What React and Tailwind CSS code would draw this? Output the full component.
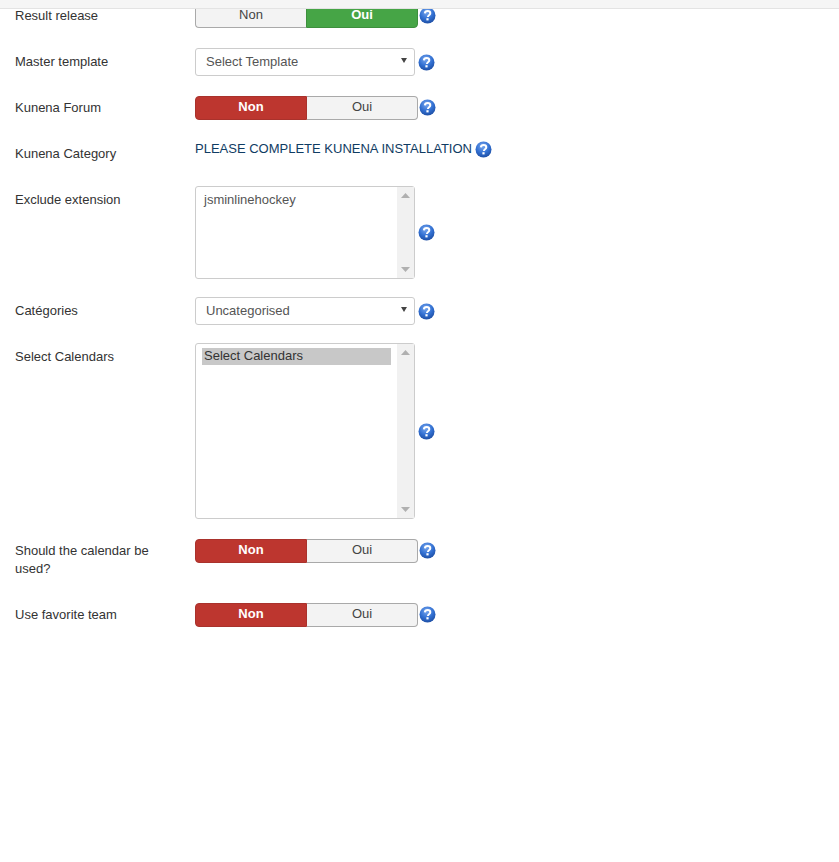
import React from 'react'

// Icône d'aide ronde bleue avec point d'interrogation
function Help({ className = '' }) {
  return (
    <svg width="17" height="17" viewBox="0 0 17 17" className={`shrink-0 ${className}`}>
      <defs>
        <radialGradient id="helpBlue" cx="45%" cy="30%" r="75%">
          <stop offset="0%" stopColor="#7aa8ee" />
          <stop offset="55%" stopColor="#3270d2" />
          <stop offset="100%" stopColor="#1b4a9e" />
        </radialGradient>
      </defs>
      <circle cx="8.5" cy="8.5" r="8" fill="url(#helpBlue)" />
      <path d="M5.9 6.4C6 4.9 7.1 4.1 8.6 4.1c1.6 0 2.7.9 2.7 2.2 0 1-.6 1.5-1.3 2-.7.5-1.1.9-1.1 1.8" fill="none" stroke="#fff" strokeWidth="2" />
      <rect x="7.4" y="11.2" width="2.2" height="2.2" fill="#fff" />
    </svg>
  )
}

function Row({ label, children }) {
  return (
    <div className="flex items-start mb-[18px]">
      <div className="w-[180px] shrink-0 pt-[5px] pb-[5px] pr-[30px] leading-[18px] text-[#333]">{label}</div>
      {children}
    </div>
  )
}

// Oui / Non : le côté actif est coloré
function Toggle({ value }) {
  const non = value === 'Non'
  return (
    <div className="flex items-center mt-[2px]">
      <div className="flex w-[223px] h-[24px] leading-[20px]">
        {non ? (
          <>
            <div className="w-[112px] text-center rounded-l-[4px] border border-[#a9322c] bg-[#bd362f] text-white font-bold">Non</div>
            <div className="flex-1 text-center rounded-r-[4px] border border-l-0 border-[#a9a9a9] bg-[#f3f3f3] text-[#444]">Oui</div>
          </>
        ) : (
          <>
            <div className="w-[111px] text-center rounded-l-[4px] border border-r-0 border-[#a9a9a9] bg-[#f3f3f3] text-[#444]">Non</div>
            <div className="flex-1 text-center rounded-r-[4px] border border-[#3d8f3d] bg-[#46a546] text-white font-bold">Oui</div>
          </>
        )}
      </div>
      <Help className="ml-px -mt-[2px]" />
    </div>
  )
}

function Select({ value }) {
  return (
    <div className="flex items-center">
      <div className="flex items-center justify-between w-[220px] h-[28px] rounded-[3px] border border-[#ccc] bg-white pl-[10px] pr-[7px] text-[#555]">
        <span>{value}</span>
        <svg width="6" height="5" viewBox="0 0 6 5" className="-mt-[4px]"><path d="M0 0h6L3 5z" fill="#444" /></svg>
      </div>
      <Help className="ml-[3px]" />
    </div>
  )
}

function ListBox({ height, children }) {
  return (
    <div className="flex items-center">
      <div className={`flex w-[220px] rounded-[3px] border border-[#ccc] bg-white ${height}`}>
        <div className="flex-1 min-w-0">{children}</div>
        <div className="flex flex-col justify-between items-center w-[17px] bg-[#f1f1f1] py-[6px]">
          <svg width="9" height="5" viewBox="0 0 9 5"><path d="M4.5 0L9 5H0z" fill="#b0b0b0" /></svg>
          <svg width="9" height="5" viewBox="0 0 9 5"><path d="M0 0h9L4.5 5z" fill="#b0b0b0" /></svg>
        </div>
      </div>
      <Help className="ml-[3px]" />
    </div>
  )
}

export default function App() {
  return (
    <div className="h-[862px] overflow-hidden bg-white text-[13px] font-['Liberation_Sans',Arial,sans-serif]">
      <div className="relative z-10 h-[9px] bg-[#f5f5f5] border-b border-[#e3e3e3]" />
      <div className="-mt-[7px] pl-[15px]">
        <Row label="Result release"><Toggle value="Oui" /></Row>
        <Row label="Master template"><Select value="Select Template" /></Row>
        <Row label="Kunena Forum"><Toggle value="Non" /></Row>
        <Row label="Kunena Category">
          <div className="flex items-start h-[28px]">
            <span className="text-[#0f3c63] leading-[18px]">PLEASE COMPLETE KUNENA INSTALLATION</span>
            <Help className="ml-[3px] mt-[1px]" />
          </div>
        </Row>
        <Row label="Exclude extension">
          <ListBox height="h-[93px]">
            <div className="pl-[8px] pt-[4px] leading-[18px] text-[#555]">jsminlinehockey</div>
          </ListBox>
        </Row>
        <Row label="Catégories"><Select value="Uncategorised" /></Row>
        <Row label="Select Calendars">
          <ListBox height="h-[176px]">
            <div className="ml-[6px] mr-[6px] mt-[4px] pl-[2px] h-[17px] leading-[16px] bg-[#c8c8c8] text-[#333]">Select Calendars</div>
          </ListBox>
        </Row>
        <Row label="Should the calendar be used?"><Toggle value="Non" /></Row>
        <Row label="Use favorite team"><Toggle value="Non" /></Row>
      </div>
    </div>
  )
}
